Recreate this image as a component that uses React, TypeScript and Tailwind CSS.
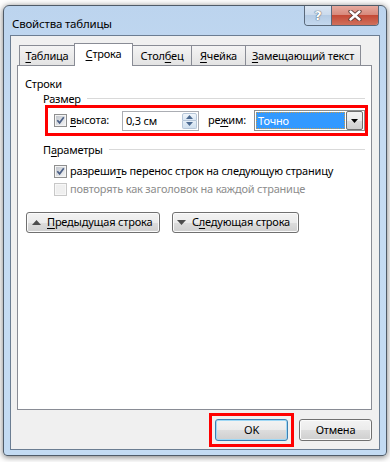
import React from 'react';

// Win7 "Свойства таблицы" dialog, Строка tab

const U = ({ children }: { children: React.ReactNode }) => (
    <span className="underline decoration-1 underline-offset-2">{children}</span>
);

const CheckBox = ({ checked, disabled }: { checked?: boolean; disabled?: boolean }) => (
    <span
        className={`flex h-[13px] w-[13px] shrink-0 items-center justify-center border ${
            disabled ? 'border-[#c8c8c8] bg-[#f7f7f7]' : 'border-[#8f8f8f] bg-[#f4f4f4]'
        }`}
    >
        <span
            className={`flex h-[9px] w-[9px] items-center justify-center ${
                disabled ? 'bg-[#efefef]' : 'bg-gradient-to-br from-[#c3c7cd] to-[#f2f3f4]'
            }`}
        >
            {checked && (
                <svg width="9" height="9" viewBox="0 0 9 9">
                    <path d="M1.3 4.2 L3.6 6.8 L7.8 1.2" stroke="#4b5f86" strokeWidth="1.7" fill="none" />
                </svg>
            )}
        </span>
    </span>
);

const GroupTitle = ({ children }: { children: React.ReactNode }) => (
    <div className="ml-[25px] mr-[6px] flex h-[15px] items-center gap-[6px] leading-[15px]">
        <span>{children}</span>
        <div className="h-px flex-1 bg-[#d9d9d9]" />
    </div>
);

const Triangle = ({ down }: { down?: boolean }) => (
    <svg width="9" height="5" viewBox="0 0 9 5">
        <path d={down ? 'M0 0 H9 L4.5 5 Z' : 'M0 5 H9 L4.5 0 Z'} fill="#4d4d4d" />
    </svg>
);

const pushBtn =
    'flex h-[21px] items-center whitespace-nowrap rounded-[3px] border border-[#707070] bg-[linear-gradient(#f3f3f3_0%,#ebebeb_50%,#dddddd_50%,#cfcfcf_100%)] shadow-[inset_0_0_0_1px_#fbfbfb]';

const tabOff =
    'flex h-[20px] items-center justify-center border border-b-0 border-[#898c95] bg-[linear-gradient(#f4f4f4,#e3e3e3)] pt-px';

export default function App() {
    return (
        <div className="h-[462px] w-[390px] overflow-hidden whitespace-nowrap bg-white pl-[3px] pt-[5px] font-['Noto_Sans',sans-serif] text-[11px] tracking-[-0.2px] text-black">
            <div className="flex h-[451px] w-[384px] flex-col rounded-t-[6px] rounded-b-[4px] border border-[#4f5b68] bg-[linear-gradient(180deg,#bcd4ee_0%,#c6dcf3_30%,#c3dbf3_100%)] shadow-[0_1px_6px_rgba(0,0,0,0.55)]">
                {/* title bar */}
                <div className="flex h-[29px] items-start justify-between">
                    <div className="pl-[8px] pt-[10px] text-[11.5px] leading-[15px] text-black">Свойства таблицы</div>
                    <div className="mr-[7px] flex overflow-hidden rounded-b-[4px] border border-t-0 border-[#59687a]">
                        <div className="flex h-[19px] w-[27px] items-center justify-center border-r border-[#59687a] bg-[linear-gradient(#dbe6f3_0%,#c9d9ec_50%,#b5cbe4_50%,#c4d8ee_100%)]">
                            <span className="font-['DejaVu_Sans',sans-serif] text-[13px] font-bold leading-none text-white [text-shadow:0_0_1px_#3b4a5c,0_0_1px_#3b4a5c]">
                                ?
                            </span>
                        </div>
                        <div className="flex h-[19px] w-[46px] items-center justify-center bg-[linear-gradient(#e6aa9f_0%,#d88a7c_45%,#c44a36_50%,#d0705c_100%)]">
                            <svg width="14" height="11" viewBox="0 0 14 11">
                                <path d="M2.5 1.5 L11.5 9.5 M11.5 1.5 L2.5 9.5" stroke="#5a3a34" strokeWidth="4.2" strokeLinecap="round" />
                                <path d="M2.5 1.5 L11.5 9.5 M11.5 1.5 L2.5 9.5" stroke="#ffffff" strokeWidth="2.4" strokeLinecap="round" />
                            </svg>
                        </div>
                    </div>
                </div>

                {/* client area */}
                <div className="mx-[6px] mb-[5px] flex flex-1 flex-col border border-[#6b7d92] bg-[#f0f0f0] pb-[8px] pl-[6px] pr-[7px] pt-[7px]">
                    {/* tabs */}
                    <div className="relative z-10 ml-[2px] flex h-[22px] items-end">
                        <div className={`${tabOff} w-[56px]`}>
                            <span><U>Т</U>аблица</span>
                        </div>
                        <div className="-mb-px -ml-px flex h-[23px] w-[59px] items-center justify-center border border-b-0 border-[#898c95] bg-white pb-px">
                            <span><U>С</U>трока</span>
                        </div>
                        <div className={`${tabOff} -ml-px w-[60px]`}>
                            <span>Стол<U>б</U>ец</span>
                        </div>
                        <div className={`${tabOff} w-[54px] border-l-0`}>
                            <span><U>Я</U>чейка</span>
                        </div>
                        <div className={`${tabOff} w-[115px] border-l-0`}>
                            <span><U>З</U>амещающий текст</span>
                        </div>
                    </div>

                    {/* tab panel */}
                    <div className="flex-1 border border-[#898c95] bg-white">
                        <div className="ml-[7px] mt-[10px] leading-[15px]">Строки</div>
                        <GroupTitle>Размер</GroupTitle>

                        <div className="-mt-px ml-[27px] mr-[3px] flex h-[31px] items-center border-[3px] border-[#ff0000] pl-[6px]">
                            <CheckBox checked />
                            <span className="ml-[3px] w-[52px]"><U>в</U>ысота:</span>
                            <div className="flex h-[20px] w-[77px] items-center border border-[#abadb3] bg-white">
                                <span className="flex-1 pl-[3px] leading-none">0,3 см</span>
                                <div className="mr-px flex h-[16px] w-[15px] flex-col">
                                    <div className="flex h-[8px] items-center justify-center rounded-t-[2px] border border-[#b6c6d8] bg-[linear-gradient(#f1f6fb,#d9e6f3)]">
                                        <svg width="7" height="4" viewBox="0 0 7 4"><path d="M0 4 H7 L3.5 0 Z" fill="#4c6a91" /></svg>
                                    </div>
                                    <div className="flex h-[8px] items-center justify-center rounded-b-[2px] border border-t-0 border-[#b6c6d8] bg-[linear-gradient(#e6eff8,#cfdfee)]">
                                        <svg width="7" height="4" viewBox="0 0 7 4"><path d="M0 0 H7 L3.5 4 Z" fill="#4c6a91" /></svg>
                                    </div>
                                </div>
                            </div>
                            <span className="ml-[9px] w-[46px]">ре<U>ж</U>им:</span>
                            <div className="flex h-[21px] w-[111px] items-center border border-[#8e8f8f] bg-white">
                                <div className="ml-px flex h-[17px] flex-1 items-center border border-dotted border-[#c89a4a] bg-[#3399ff] pl-px leading-none text-white">
                                    Точно
                                </div>
                                <div className="mx-px flex h-[19px] w-[17px] items-center justify-center rounded-[2px] border border-[#707070] bg-[linear-gradient(#f2f2f2_0%,#ebebeb_50%,#dddddd_50%,#cfcfcf_100%)]">
                                    <svg width="7" height="4" viewBox="0 0 7 4"><path d="M0 0 H7 L3.5 4 Z" fill="#000" /></svg>
                                </div>
                            </div>
                        </div>

                        <div className="mt-[6px]">
                            <GroupTitle>П<U>а</U>раметры</GroupTitle>
                        </div>
                        <div className="ml-[36px] mt-[5px] flex h-[18px] items-center gap-[3px]">
                            <CheckBox checked />
                            <span>разреши<U>т</U>ь перенос строк на следующую страницу</span>
                        </div>
                        <div className="ml-[36px] flex h-[18px] items-center gap-[3px] text-[#8d8d8d]">
                            <CheckBox disabled />
                            <span>повторять как заголовок на каждой странице</span>
                        </div>

                        <div className="ml-[8px] mt-[14px] flex gap-[12px]">
                            <button className={`${pushBtn} w-[134px] gap-[6px] pl-[5px]`}>
                                <Triangle />
                                <span><U>П</U>редыдущая строка</span>
                            </button>
                            <button className={`${pushBtn} w-[127px] gap-[6px] pl-[4px]`}>
                                <Triangle down />
                                <span>С<U>л</U>едующая строка</span>
                            </button>
                        </div>
                    </div>

                    {/* dialog buttons */}
                    <div className="mt-[9px] flex justify-end gap-[11px]">
                        <div className="-mx-[6px] -my-[6px] border-[3px] border-[#ff0000] p-[3px]">
                            <button className="flex h-[22px] w-[73px] items-center justify-center rounded-[3px] border border-[#3c7fb1] bg-[linear-gradient(#f3f3f3_0%,#ebebeb_50%,#dddddd_50%,#cfcfcf_100%)] shadow-[inset_0_0_0_1px_#9fd8f5]">
                                OK
                            </button>
                        </div>
                        <button className={`${pushBtn} h-[22px] w-[73px] justify-center`}>Отмена</button>
                    </div>
                </div>
            </div>
        </div>
    );
}
